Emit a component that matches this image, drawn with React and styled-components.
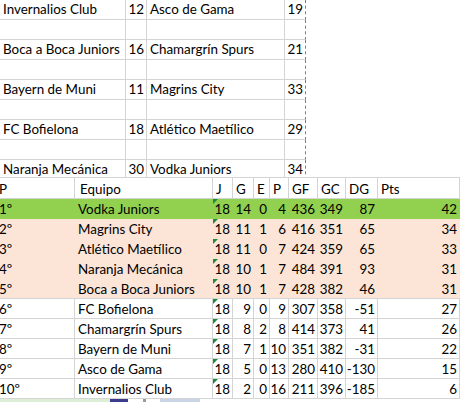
import React from "react";
import styled, { createGlobalStyle } from "styled-components";

const GRID = "#d4d4d4";

const Global = createGlobalStyle`
  html, body { margin: 0; padding: 0; background: #ffffff; }
  body {
    font-family: Lato, "Open Sans", "Liberation Sans", sans-serif;
    font-size: 13.4px;
    color: #000000;
    width: 460px;
    height: 402px;
    overflow: hidden;
  }
`;

const Page = styled.div`
  width: 460px;
  display: flex;
  flex-direction: column;
`;

/* ---------- top sheet (fixture list) ---------- */
const TopSheet = styled.div`
  height: 178px;
  box-sizing: border-box;
  overflow: hidden;
  border-bottom: 1px solid ${GRID};
  display: grid;
  grid-template-columns: 126px 21px 138px 21px 1fr;
  grid-auto-rows: 20px;
`;

const TopCell = styled.div`
  box-sizing: border-box;
  border-bottom: 1px solid ${GRID};
  border-right: 1px ${(p) => (p.$edge ? "dashed #7d7d7d" : `solid ${GRID}`)};
  display: flex;
  align-items: flex-end;
  justify-content: ${(p) => (p.$num ? "flex-end" : "flex-start")};
  padding: 0 2px 1px 3px;
  line-height: 18px;
  white-space: nowrap;
`;

const Void = styled.div`
  background: #ffffff;
`;

/* ---------- standings table ---------- */
const COLS = "75px 138px 20px 21px 16px 19px 29px 28px 32px 1fr";

const Row = styled.div`
  display: grid;
  grid-template-columns: ${COLS};
  height: ${(p) => (p.$head ? 21 : 20)}px;
  box-sizing: border-box;
  background: ${(p) => p.$fill || "#ffffff"};
  border-bottom: 1px solid ${(p) => (p.$noline ? "transparent" : GRID)};
`;

const Cell = styled.div`
  position: relative;
  box-sizing: border-box;
  border-right: 1px solid ${(p) => (p.$plain ? "transparent" : GRID)};
  display: flex;
  align-items: center;
  justify-content: ${(p) => (p.$num ? "flex-end" : "flex-start")};
  padding: 1px ${(p) => (p.$num ? 2 : 0)}px 0 ${(p) => p.$pl ?? 3}px;
  white-space: nowrap;
  line-height: 18px;
  &::before {
    content: "";
    display: ${(p) => (p.$flag ? "block" : "none")};
    position: absolute;
    left: 0;
    top: 0;
    border-top: 5px solid #1f8a3a;
    border-right: 5px solid transparent;
  }
`;

const PosText = styled.span`
  margin-left: -1px;
`;

/* ---------- bottom strip of the next screenshot ---------- */
const Strip = styled.div`
  height: 3px;
  display: flex;
`;

const Seg = styled.div`
  width: ${(p) => p.$w}px;
  background: ${(p) => p.$c};
`;

const pairs = [
  ["Invernalios Club", "12", "Asco de Gama", "19"],
  ["Boca a Boca Juniors", "16", "Chamargrín Spurs", "21"],
  ["Bayern de Muni", "11", "Magrins City", "33"],
  ["FC Bofielona", "18", "Atlético Maetílico", "29"],
  ["Naranja Mecánica", "30", "Vodka Juniors", "34"],
];

const table = [
  ["1º", "Vodka Juniors", 18, 14, 0, 4, 436, 349, 87, 42],
  ["2º", "Magrins City", 18, 11, 1, 6, 416, 351, 65, 34],
  ["3º", "Atlético Maetílico", 18, 11, 0, 7, 424, 359, 65, 33],
  ["4º", "Naranja Mecánica", 18, 10, 1, 7, 484, 391, 93, 31],
  ["5º", "Boca a Boca Juniors", 18, 10, 1, 7, 428, 382, 46, 31],
  ["6º", "FC Bofielona", 18, 9, 0, 9, 307, 358, -51, 27],
  ["7º", "Chamargrín Spurs", 18, 8, 2, 8, 414, 373, 41, 26],
  ["8º", "Bayern de Muni", 18, 7, 1, 10, 351, 382, -31, 22],
  ["9º", "Asco de Gama", 18, 5, 0, 13, 280, 410, -130, 15],
  ["10º", "Invernalios Club", 18, 2, 0, 16, 211, 396, -185, 6],
];

const heads = ["J", "G", "E", "P", "GF", "GC", "DG", "Pts"];

function fillFor(i) {
  if (i === 0) return "#92d050";
  if (i <= 4) return "#fce4d6";
  return null;
}

export default function App() {
  return (
    <Page>
      <Global />
      <TopSheet>
        {pairs.map((p, i) => (
          <React.Fragment key={i}>
            <TopCell>{p[0]}</TopCell>
            <TopCell $num>{p[1]}</TopCell>
            <TopCell>{p[2]}</TopCell>
            <TopCell $num $edge>{p[3]}</TopCell>
            <Void />
            <TopCell />
            <TopCell />
            <TopCell />
            <TopCell $edge />
            <Void />
          </React.Fragment>
        ))}
      </TopSheet>

      <Row $head>
        <Cell $pl={0}>
          <PosText>P</PosText>
        </Cell>
        <Cell $pl={5}>Equipo</Cell>
        {heads.map((h) => (
          <Cell key={h} $pl={3}>
            {h}
          </Cell>
        ))}
      </Row>

      {table.map((r, i) => {
        const fill = fillFor(i);
        const plain = !!fill;
        return (
          <Row key={r[0]} $fill={fill} $noline={plain && i < 4}>
            <Cell $plain={plain} $pl={0}>
              <PosText>{r[0]}</PosText>
            </Cell>
            <Cell $plain={plain} $pl={3}>
              {r[1]}
            </Cell>
            {r.slice(2).map((v, k) => (
              <Cell key={k} $num $plain={plain} $flag={k === 0}>
                {v}
              </Cell>
            ))}
          </Row>
        );
      })}

      <Strip>
        <Seg $w={110} $c="#dcefd6" />
        <Seg $w={18} $c="#3c3c8c" />
        <Seg $w={15} $c="#ffffff" />
        <Seg $w={3} $c="#9a9a9a" />
        <Seg $w={14} $c="#ffffff" />
        <Seg $w={40} $c="#c9d4e4" />
        <Seg $w={260} $c="#ffffff" />
      </Strip>
    </Page>
  );
}
